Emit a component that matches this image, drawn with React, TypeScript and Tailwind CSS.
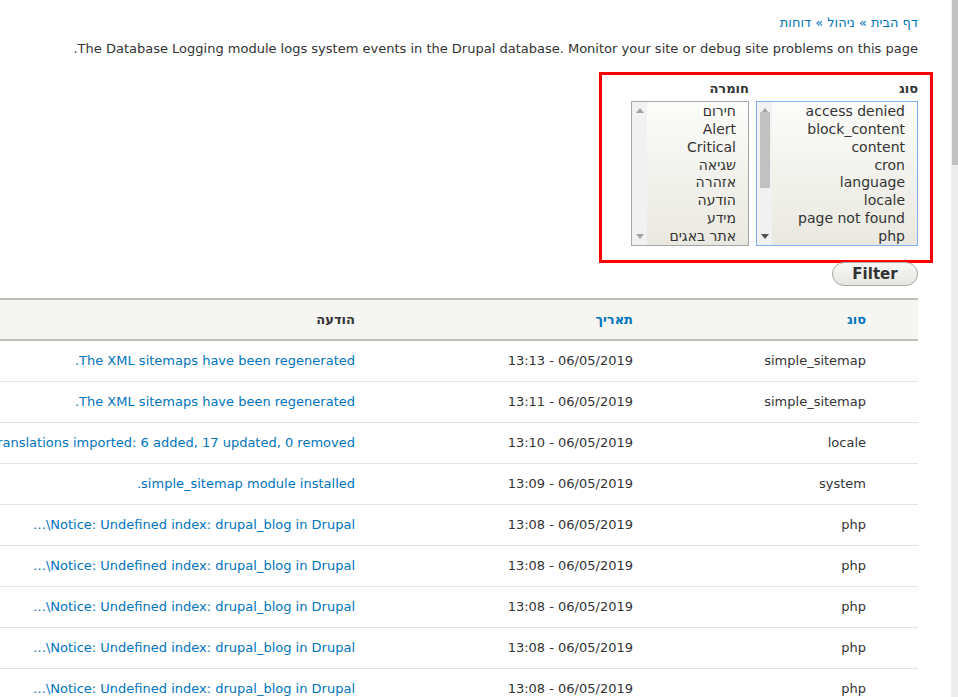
import React from "react";

const types = [
  "access denied",
  "block_content",
  "content",
  "cron",
  "language",
  "locale",
  "page not found",
  "php",
];

const severities = ["חירום", "Alert", "Critical", "שגיאה", "אזהרה", "הודעה", "מידע", "אתר באגים"];

const rows = [
  { type: "simple_sitemap", date: "06/05/2019 - 13:13", msg: "The XML sitemaps have been regenerated." },
  { type: "simple_sitemap", date: "06/05/2019 - 13:11", msg: "The XML sitemaps have been regenerated." },
  { type: "locale", date: "06/05/2019 - 13:10", msg: "Translations imported: 6 added, 17 updated, 0 removed." },
  { type: "system", date: "06/05/2019 - 13:09", msg: "simple_sitemap module installed." },
  { type: "php", date: "06/05/2019 - 13:08", msg: "Notice: Undefined index: drupal_blog in Drupal\\…" },
  { type: "php", date: "06/05/2019 - 13:08", msg: "Notice: Undefined index: drupal_blog in Drupal\\…" },
  { type: "php", date: "06/05/2019 - 13:08", msg: "Notice: Undefined index: drupal_blog in Drupal\\…" },
  { type: "php", date: "06/05/2019 - 13:08", msg: "Notice: Undefined index: drupal_blog in Drupal\\…" },
  { type: "php", date: "06/05/2019 - 13:08", msg: "Notice: Undefined index: drupal_blog in Drupal\\…" },
];

const Arrow = ({ up, color }: { up?: boolean; color: string }) => (
  <svg width="8" height="5" viewBox="0 0 8 5">
    <polygon points={up ? "0,5 8,5 4,0" : "0,0 8,0 4,5"} fill={color} />
  </svg>
);

const ListBox = ({
  items,
  width,
  focused,
  thumb,
}: {
  items: string[];
  width: string;
  focused?: boolean;
  thumb?: boolean;
}) => (
  <div
    className={`flex flex-row-reverse h-[145px] border ${
      focused ? "border-[#82aeee]" : "border-[#a6a6a6]"
    } ${width}`}
  >
    <div className="w-[15px] shrink-0 bg-[#f1f1f1] flex flex-col items-center justify-between py-[6px]">
      <Arrow up color="#a3a3a3" />
      {thumb && <div className="w-[10px] h-[76px] bg-[#c1c1c1] -mt-[1px]" />}
      {thumb && <div className="flex-1" />}
      <Arrow color={thumb ? "#505050" : "#a3a3a3"} />
    </div>
    <div className="flex-1 bg-gradient-to-b from-[#fcfcfa] to-[#e9e8e0] pr-[12px] pt-[1px] overflow-hidden">
      {items.map((t) => (
        <div key={t} className="text-[14px] leading-[17.86px] text-[#333]">
          {t}
        </div>
      ))}
    </div>
  </div>
);

export default function App() {
  return (
    <div className="flex h-[697px] w-[958px] overflow-hidden bg-white font-['DejaVu_Sans',sans-serif]">
      <div dir="rtl" className="flex-1 overflow-hidden">
        <div className="pr-[33px] pt-[14px]">
          <div className="text-[13px] leading-[18px] text-[#0074bd]">
            דף הבית » ניהול » דוחות
          </div>
          <p className="mt-[8px] text-[13px] leading-[18px] text-[#333]">
            The Database Logging module logs system events in the Drupal database. Monitor your site or debug site problems on this page.
          </p>
        </div>

        <div className="pr-[18px] mt-[14px]">
          <div className="w-[334px] border-[3px] border-[#ff0000] pr-[12px] pt-[6px] pb-[14px]">
            <div className="flex gap-[7px]">
              <div>
                <div className="text-[13px] font-bold leading-[16px] text-[#333] mb-[4px]">סוג</div>
                <ListBox items={types} width="w-[162px]" focused thumb />
              </div>
              <div>
                <div className="text-[13px] font-bold leading-[16px] text-[#333] mb-[4px]">חומרה</div>
                <ListBox items={severities} width="w-[118px]" />
              </div>
            </div>
          </div>
        </div>

        <div className="pr-[33px] -mt-[1px]">
          <button className="w-[86px] h-[24px] rounded-full border border-[#a8a8a4] bg-gradient-to-b from-[#f8f8f6] to-[#e6e6e1] text-[15px] font-bold text-[#333] leading-[20px]">
            Filter
          </button>
        </div>

        <div className="pr-[33px] mt-[12px]">
          <table className="table-fixed w-[1151px] border-collapse text-[13px] text-[#333]">
            <colgroup>
              <col className="w-[40px]" />
              <col className="w-[233px]" />
              <col className="w-[278px]" />
              <col className="w-[450px]" />
              <col className="w-[150px]" />
            </colgroup>
            <thead>
              <tr className="h-[41px] bg-[#f5f5f2] border-y-2 border-[#bfbfba] text-[13px] font-bold">
                <th />
                <th className="text-right pr-[12px] text-[#0074bd]">סוג</th>
                <th className="text-right pr-[12px] text-[#0074bd]">תאריך</th>
                <th className="text-right pr-[12px]">הודעה</th>
                <th className="text-right pr-[12px]">משתמש</th>
              </tr>
            </thead>
            <tbody>
              {rows.map((r, i) => (
                <tr key={i} className="h-[41px] border-b border-[#e6e4df]">
                  <td />
                  <td className="pr-[12px]">{r.type}</td>
                  <td className="pr-[12px]">{r.date}</td>
                  <td className="pr-[12px] whitespace-nowrap text-[#0074bd]">{r.msg}</td>
                  <td className="pr-[12px]">admin</td>
                </tr>
              ))}
            </tbody>
          </table>
        </div>
      </div>
      <div className="w-[7px] shrink-0 bg-[#ededed] flex flex-col items-end">
        <div className="w-[6px] h-[165px] bg-[#c1c1c1]" />
      </div>
    </div>
  );
}
